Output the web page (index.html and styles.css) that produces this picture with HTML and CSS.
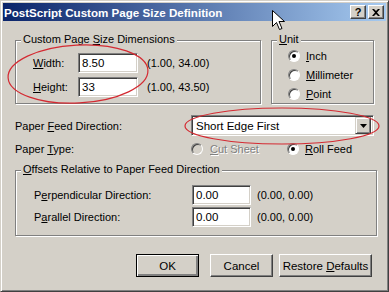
FILE: index.html
```html
<!DOCTYPE html>
<html lang="en">
<head>
  <meta charset="UTF-8">
  <title>PostScript Custom Page Size Definition</title>
  <link rel="stylesheet" href="styles.css">
</head>
<body>

<div class="window">
  <div class="titlebar">
    <span class="title">PostScript Custom Page Size Definition</span>
    <div class="title-buttons">
      <span class="tbtn">?</span>
      <span class="tbtn close">
        <svg width="8" height="7" viewBox="0 0 8 7"><path d="M0 0h2l2 2 2-2h2L5 3.5 8 7H6L4 5 2 7H0l3-3.5z" fill="#000"/></svg>
      </span>
    </div>
  </div>

  <div class="content">
    <div class="top-row">
      <div class="group dims">
        <span class="group-title">Custom Page <u>S</u>ize Dimensions</span>
        <div class="dim-row">
          <span class="dim-label"><u>W</u>idth:</span>
          <span class="field w60">8.50</span>
          <span class="hint">(1.00, 34.00)</span>
        </div>
        <div class="dim-row">
          <span class="dim-label"><u>H</u>eight:</span>
          <span class="field w60">33</span>
          <span class="hint">(1.00, 43.50)</span>
        </div>
      </div>

      <div class="group unit">
        <span class="group-title"><u>U</u>nit</span>
        <div class="radio-row"><span class="radio checked"></span><span><u>I</u>nch</span></div>
        <div class="radio-row"><span class="radio"></span><span><u>M</u>illimeter</span></div>
        <div class="radio-row"><span class="radio"></span><span><u>P</u>oint</span></div>
      </div>
    </div>

    <div class="line feed">
      <span class="line-label">Paper <u>F</u>eed Direction:</span>
      <div class="select">
        <span class="select-text">Short Edge First</span>
        <span class="select-btn">
          <svg width="7" height="4" viewBox="0 0 7 4"><path d="M0 0h7L3.5 4z" fill="#000"/></svg>
        </span>
      </div>
    </div>

    <div class="line type">
      <span class="line-label">Paper <u>T</u>ype:</span>
      <div class="radio-row cut disabled"><span class="radio"></span><span><u>C</u>ut Sheet</span></div>
      <div class="radio-row"><span class="radio checked"></span><span><u>R</u>oll Feed</span></div>
    </div>

    <div class="group offsets">
      <span class="group-title"><u>O</u>ffsets Relative to Paper Feed Direction</span>
      <div class="off-row">
        <span class="off-label">P<u>e</u>rpendicular Direction:</span>
        <span class="field w59">0.00</span>
        <span class="hint">(0.00, 0.00)</span>
      </div>
      <div class="off-row">
        <span class="off-label">P<u>a</u>rallel Direction:</span>
        <span class="field w59">0.00</span>
        <span class="hint">(0.00, 0.00)</span>
      </div>
    </div>

    <div class="buttons">
      <button class="btn default">OK</button>
      <button class="btn">Cancel</button>
      <button class="btn wide">Restore <u>D</u>efaults</button>
    </div>
  </div>

  <!-- annotations drawn on top of the screenshot -->
  <svg class="marks" width="389" height="292" viewBox="0 0 389 292">
    <ellipse cx="78" cy="74" rx="70" ry="29" transform="rotate(-3 78 74)" fill="none" stroke="#d42a32" stroke-width="1.2"/>
    <ellipse cx="282" cy="126" rx="97" ry="18" fill="none" stroke="#d42a32" stroke-width="1.2"/>
  </svg>
  <svg class="cursor" width="13" height="21" viewBox="0 0 13 21">
    <path d="M0.5 0.5v16l4-4 3 7 2.5-1-3-7h5.5z" fill="#fff" stroke="#000" stroke-width="1"/>
  </svg>
</div>

</body>
</html>
```

FILE: styles.css
```css
body {
  margin: 0;
  font-family: "Liberation Sans", Arial, sans-serif;
  font-size: 11px;
  color: #000;
}
.window {
  position: relative;
  width: 389px;
  height: 292px;
  box-sizing: border-box;
  background: #d4d0c8;
  border: 1px solid;
  border-color: #d4d0c8 #404040 #404040 #d4d0c8;
  box-shadow: inset 1px 1px #fff, inset -1px -1px #808080;
  padding: 2px;
  overflow: hidden;
}
u {
  text-decoration: underline;
  text-underline-offset: 1px;
}

/* title bar */
.titlebar {
  height: 18px;
  display: flex;
  align-items: center;
  justify-content: space-between;
  background: linear-gradient(to right, #0a246a, #a6caf0);
  padding-left: 1px;
}
.title {
  color: #fff;
  font-weight: bold;
  font-size: 11.6px;
}
.title-buttons {
  display: flex;
  gap: 2px;
  padding-right: 2px;
}
.tbtn {
  width: 16px;
  height: 14px;
  box-sizing: border-box;
  background: #d4d0c8;
  border: 1px solid;
  border-color: #fff #404040 #404040 #fff;
  box-shadow: inset -1px -1px #808080;
  display: flex;
  align-items: center;
  justify-content: center;
  font-weight: bold;
  font-size: 11px;
  line-height: 12px;
}

.content {
  padding: 19px 0 0 12px;
}

/* group boxes */
.group {
  border: 1px solid #808080;
  box-shadow: inset 1px 1px #fff, 1px 1px #fff;
  box-sizing: border-box;
}
.group-title {
  display: table;
  margin-top: -8px;
  padding: 0 2px;
  line-height: 13px;
  background: #d4d0c8;
}

.top-row {
  display: flex;
  gap: 10px;
}
.dims {
  width: 246px;
  height: 64px;
  padding: 7px 0 0 17px;
}
.dims .group-title {
  margin: -15px 0 7px -12px;
}
.dim-row {
  display: flex;
  align-items: center;
  height: 20px;
  margin-bottom: 4px;
}
.dim-label {
  width: 45px;
}
.hint {
  margin-left: 9px;
}

.field {
  height: 20px;
  box-sizing: border-box;
  background: #fff;
  border: 1px solid;
  border-color: #808080 #fff #fff #808080;
  box-shadow: inset 1px 1px #404040, inset -1px -1px #d4d0c8;
  padding: 0 3px;
  line-height: 18px;
  font-size: 11.5px;
}
.w60 { width: 60px; }
.w59 { width: 59px; }

.unit {
  width: 103px;
  height: 64px;
  padding-left: 16px;
}
.unit .group-title {
  margin-left: -11px;
}
.radio-row {
  display: flex;
  align-items: center;
  gap: 6px;
  height: 19px;
}
.radio {
  width: 12px;
  height: 12px;
  box-sizing: border-box;
  border-radius: 50%;
  background: #fff;
  border: 1px solid;
  border-color: #808080 #fff #fff #808080;
  box-shadow: inset 1px 1px #404040;
  display: flex;
  align-items: center;
  justify-content: center;
}
.radio.checked::after {
  content: "";
  width: 4px;
  height: 4px;
  border-radius: 50%;
  background: #000;
}
.disabled {
  color: #808080;
  text-shadow: 1px 1px #fff;
}
.disabled .radio {
  background: #d4d0c8;
}

/* single lines */
.line {
  display: flex;
  align-items: center;
}
.line-label {
  width: 176px;
}
.feed {
  margin-top: 11px;
  height: 21px;
}
.select {
  width: 183px;
  height: 21px;
  box-sizing: border-box;
  background: #fff;
  border: 1px solid;
  border-color: #808080 #fff #fff #808080;
  box-shadow: inset 1px 1px #404040, inset -1px -1px #d4d0c8;
  display: flex;
  align-items: center;
  justify-content: space-between;
  padding: 2px;
}
.select-text {
  padding-left: 2px;
  font-size: 11.5px;
}
.select-btn {
  width: 16px;
  height: 17px;
  box-sizing: border-box;
  background: #d4d0c8;
  border: 1px solid;
  border-color: #d4d0c8 #404040 #404040 #d4d0c8;
  box-shadow: inset 1px 1px #fff, inset -1px -1px #808080;
  display: flex;
  align-items: center;
  justify-content: center;
}
.type {
  margin-top: 4px;
  height: 18px;
}
.cut {
  width: 96px;
  gap: 7px;
}

.offsets {
  width: 362px;
  margin-top: 12px;
  padding: 0 0 8px 18px;
}
.offsets .group-title {
  margin: -8px 0 9px -13px;
}
.off-row {
  display: flex;
  align-items: center;
  height: 20px;
  margin-bottom: 2px;
}
.off-row:last-child {
  margin-bottom: 0;
}
.off-label {
  width: 158px;
}
.off-row .hint {
  margin-left: 6px;
}

/* buttons */
.buttons {
  display: flex;
  justify-content: flex-end;
  gap: 11px;
  margin-top: 18px;
  padding-right: 14px;
}
.btn {
  width: 63px;
  height: 23px;
  box-sizing: border-box;
  font-family: "Liberation Sans", Arial, sans-serif;
  font-size: 11.5px;
  background: #d4d0c8;
  border: 1px solid;
  border-color: #fff #404040 #404040 #fff;
  box-shadow: inset -1px -1px #808080;
  padding: 0;
  color: #000;
}
.btn.default {
  border: 1px solid #000;
  box-shadow: inset 1px 1px #fff, inset -2px -2px #808080, inset -1px -1px #404040;
}
.btn.wide {
  width: 93px;
  margin-left: -5px;
}

.marks {
  position: absolute;
  left: -1px;
  top: -1px;
  pointer-events: none;
}
.cursor {
  position: absolute;
  left: 271px;
  top: 9px;
}
```
